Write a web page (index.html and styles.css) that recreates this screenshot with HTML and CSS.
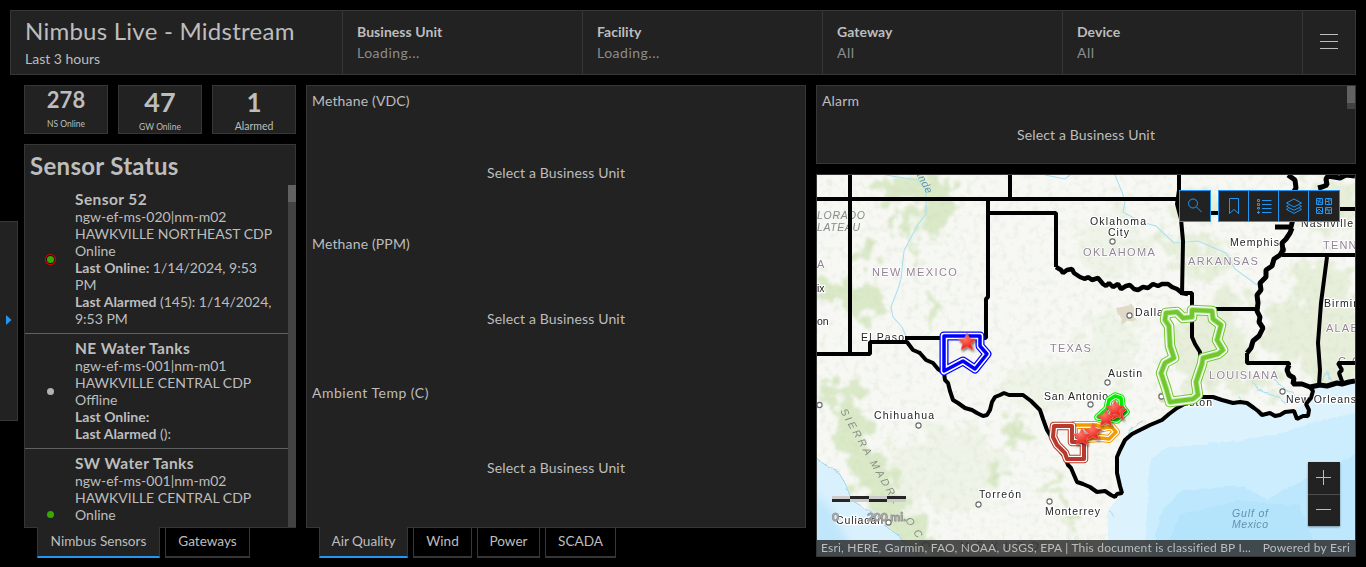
FILE: index.html
```html
<!DOCTYPE html>
<html lang="en">
<head>
<meta charset="utf-8">
<title>Nimbus Live - Midstream</title>
<link rel="stylesheet" href="styles.css">
</head>
<body>
<div class="dashboard">
  <header class="header">
    <div class="brand"><h1 class="title">Nimbus Live - Midstream</h1><div class="subtitle">Last 3 hours</div></div>
    <div class="selector"><b>Business Unit</b><span>Loading...</span></div>
    <div class="selector"><b>Facility</b><span>Loading...</span></div>
    <div class="selector"><b>Gateway</b><span>All</span></div>
    <div class="selector"><b>Device</b><span>All</span></div>
    <div class="menu"><i></i><i></i><i></i></div>
  </header>
  <main class="content">
    <section class="left">
      <div class="counters">
        <div class="counter c1"><strong>278</strong><span>NS Online</span></div>
        <div class="counter c2"><strong>47</strong><span>GW Online</span></div>
        <div class="counter c3"><strong>1</strong><span>Alarmed</span></div>
      </div>
      <div class="panel sensors">
        <h2 class="sensors-title">Sensor Status</h2>
        <div class="list-wrap">
          <div class="list">
            <div class="item">
              <div class="mark"><span class="dot alarm"></span></div>
              <div class="text"><h3>Sensor 52</h3><p>ngw-ef-ms-020|nm-m02</p><p>HAWKVILLE NORTHEAST CDP</p><p>Online</p><p><b>Last Online:</b> 1/14/2024, 9:53<br>PM</p><p><b>Last Alarmed</b> (145): 1/14/2024,<br>9:53 PM</p></div>
            </div>
            <div class="item">
              <div class="mark"><span class="dot off"></span></div>
              <div class="text"><h3>NE Water Tanks</h3><p>ngw-ef-ms-001|nm-m01</p><p>HAWKVILLE CENTRAL CDP</p><p>Offline</p><p><b>Last Online:</b></p><p><b>Last Alarmed</b> ():</p></div>
            </div>
            <div class="item last">
              <div class="mark"><span class="dot"></span></div>
              <div class="text"><h3>SW Water Tanks</h3><p>ngw-ef-ms-001|nm-m02</p><p>HAWKVILLE CENTRAL CDP</p><p>Online</p><p><b>Last Online:</b></p></div>
            </div>
          </div>
          <div class="track"><div class="thumb"></div></div>
        </div>
      </div>
      <nav class="tabs"><a class="tab active t-ns">Nimbus Sensors</a><a class="tab t-gw">Gateways</a></nav>
    </section>
    <section class="middle">
      <div class="panel charts">
        <div class="chart"><h4>Methane (VDC)</h4><div class="empty">Select a Business Unit</div></div>
        <div class="chart"><h4>Methane (PPM)</h4><div class="empty">Select a Business Unit</div></div>
        <div class="chart"><h4 class="wide">Ambient Temp (C)</h4><div class="empty">Select a Business Unit</div></div>
      </div>
      <nav class="tabs"><a class="tab active t-air">Air Quality</a><a class="tab t-wind">Wind</a><a class="tab t-power">Power</a><a class="tab t-scada">SCADA</a></nav>
    </section>
    <section class="right">
      <div class="panel alarm-panel">
        <div class="chart"><h4>Alarm</h4><div class="empty">Select a Business Unit</div></div>
        <div class="alarm-track"><div class="alarm-thumb"></div></div>
      </div>
      <div class="map">
        <svg class="basemap" viewBox="817 175 538 381" width="538" height="381">
          <defs>
            <filter id="rough" x="-20%" y="-20%" width="140%" height="140%">
              <feTurbulence type="fractalNoise" baseFrequency="0.06" numOctaves="4" seed="4" result="n"/>
              <feDisplacementMap in="SourceGraphic" in2="n" scale="46" xChannelSelector="R" yChannelSelector="G"/>
              <feGaussianBlur stdDeviation="1.6"/>
            </filter>
            <filter id="edge" x="-5%" y="-5%" width="110%" height="110%">
              <feTurbulence type="fractalNoise" baseFrequency="0.13" numOctaves="2" seed="9" result="n"/>
              <feDisplacementMap in="SourceGraphic" in2="n" scale="5" xChannelSelector="R" yChannelSelector="G"/>
            </filter>
            <filter id="relief" x="0" y="0" width="100%" height="100%">
              <feTurbulence type="fractalNoise" baseFrequency="0.15" numOctaves="5" seed="12"/>
              <feColorMatrix values="0 0 0 0 0.58  0 0 0 0 0.66  0 0 0 0 0.48  2.6 0 0 0 -1.25"/>
            </filter>
            <filter id="soft"><feGaussianBlur stdDeviation="5"/></filter>
            <filter id="shade" x="-40%" y="-40%" width="190%" height="190%"><feDropShadow dx="1" dy="1.5" stdDeviation="1" flood-opacity=".6"/></filter>
            <radialGradient id="red" cx=".4" cy=".35"><stop offset="0" stop-color="#ff7668"/><stop offset="1" stop-color="#ec2a22"/></radialGradient>
            <path id="star" fill="url(#red)" stroke="#ee6e64" stroke-width=".6" d="M0-9L2.700-3.300 9-2.900 4.300 1.600 5.900 8 0 4.800-5.900 8-4.300 1.600-9-2.900-2.700-3.300z"/>
            <path id="zone-green" d="M1166 313l11-1 6 6 9-1v-7l20 1 1 8 8 6-4 15 6 10-5 4-15 4-1 6-6 18 2 13-5 4-23 3-4-14-5-15 4-10 9-5-4-12-1-20-4-6z"/>
            <path id="zone-blue" d="M944 336h36v10l7 8-12 15-12-8-19 10z"/>
            <path id="zone-orange" d="M1074 425h22l8 3 7-2 5 6-7 7-8-1-27 2z"/>
            <path id="zone-red" d="M1054 426h18v16h12v17h-17l-2-6-8-8-4-8z"/>
            <path id="zone-lime" d="M1098 417l9-8 2-9 6-4 6 2 1 9 4 5-9 8z"/>
            <clipPath id="water"><path d="M1108 556V510L1122 493 1117 473 1117 457 1125 440 1140 430 1162 420 1177 408 1200 397 1233 403 1247 403 1262 415 1293 412 1305 403 1312 387 1355 381V556z"/></clipPath>
          </defs>
          <path fill="#f7f8f4" d="M817 175h538v381H817z"/>
          <g filter="url(#rough)" fill="#d3e5bc">
            <g opacity=".8">
              <ellipse cx="905" cy="188" rx="36" ry="13"/><ellipse cx="936" cy="204" rx="15" ry="35"/><ellipse cx="910" cy="224" rx="9" ry="16"/>
              <ellipse cx="842" cy="294" rx="30" ry="11"/><ellipse cx="868" cy="305" rx="18" ry="12"/><ellipse cx="930" cy="308" rx="7" ry="17"/>
              <ellipse cx="868" cy="253" rx="11" ry="12"/><ellipse cx="914" cy="262" rx="4" ry="20"/>
              <path d="M827 382l30 3 12 55 40 62 35 54h-48l-24-48-26-42z"/>
              <ellipse cx="1061" cy="499" rx="4" ry="34" transform="rotate(-30 1061 499)"/><ellipse cx="1013" cy="430" rx="10" ry="16"/>
              <ellipse cx="1001" cy="473" rx="12" ry="5"/>
            </g>
            <g opacity=".45">
              <ellipse cx="1190" cy="244" rx="46" ry="8"/><ellipse cx="1200" cy="268" rx="35" ry="10"/><ellipse cx="1200" cy="205" rx="28" ry="16"/>
              <ellipse cx="1330" cy="330" rx="30" ry="65"/><ellipse cx="1208" cy="350" rx="42" ry="38"/><ellipse cx="1285" cy="335" rx="22" ry="32"/>
              <ellipse cx="1328" cy="206" rx="36" ry="24"/><ellipse cx="1307" cy="285" rx="14" ry="26"/><ellipse cx="1247" cy="384" rx="35" ry="10"/>
              <ellipse cx="1230" cy="304" rx="22" ry="12"/>
            </g>
            <g opacity=".2"><ellipse cx="1110" cy="348" rx="30" ry="40"/><ellipse cx="1050" cy="385" rx="50" ry="24"/><ellipse cx="1113" cy="245" rx="38" ry="32"/><ellipse cx="948" cy="468" rx="58" ry="42"/></g>
          </g>
          <path filter="url(#relief)" opacity=".25" d="M817 175h538v381H817z"/>
          <path filter="url(#edge)" fill="#e0d9c7" d="M1116 308l16-3 4 14-14 5zM1157 393l10-2 3 10-11 1z"/>
          <path fill="#d9f1fd" stroke="#8ccdea" stroke-width=".8" filter="url(#edge)" d="M812 456l11 8 14 6 8 13 8 18 23 14 14 15 12 9 20 20H812z"/>
          <path fill="#bfe6fb" filter="url(#soft)" d="M812 490l20 20 25 50h-45z"/>
          <g clip-path="url(#water)">
            <path fill="#dcf3fe" d="M1100 370h260v190h-260z"/>
            <path fill="#ccedfe" filter="url(#edge)" d="M1144 560l6-100 16-12 70-7 45-8 40-13 40-8v148z"/>
            <path fill="#bce7fd" filter="url(#edge)" d="M1150 560l12-50 20-20 60-4 25 14 45-25 48-23v108z"/>
            <path fill="#b0e1fc" opacity=".6" filter="url(#edge)" d="M1160 560l20-45 60-15 60 5 20 55z"/>
          </g>
          <g fill="none" stroke="#acdff2" stroke-width="1.1">
            <path d="M886 175l18 3 14 2 8 10v24l-9 12-13 25-3 28-3 10-7 18 2 10 9 10 4 9"/>
            <path d="M1115 175l7 17 3 10-2 10 18 10 15 4 18 17 24-2 28 12 9 16 22 16M1045 175l20 4 5-4"/>
            <path filter="url(#edge)" d="M1125 437l8-11 10-4M1252 380l6 10 20 6 9 8M1274 378l8 10 10 4 5 9M1317 386l10-14 5 10 10 2M1108 510l6 7M1238 396l8 8"/>
          </g>
          <g class="maplabel river">
            <text class="blue" transform="translate(915 172) rotate(62)" textLength="25">ande</text>
            <text x="817" y="219" textLength="48">LORADO</text><text x="817" y="231" textLength="43">LATEAU</text>
            <text x="1232" y="517" textLength="36" class="blue">Gulf of</text><text x="1232" y="528" textLength="36" class="blue">Mexico</text>
            <text transform="translate(840 411) rotate(60)" textLength="108">SIERRA MADRE</text><text transform="translate(905 520) rotate(57)" textLength="36">OCC</text>
          </g>
          <g class="maplabel state">
            <text x="817" y="268">A</text><text x="872" y="276" textLength="86">NEW MEXICO</text><text x="1050" y="352" textLength="42">TEXAS</text>
            <text x="1083" y="256" textLength="73">OKLAHOMA</text><text x="1188" y="265" textLength="71">ARKANSAS</text><text x="1209" y="379" textLength="70">LOUISIANA</text>
            <text x="1323" y="249">TENN</text><text x="1326" y="332">ALAB</text><text x="1338" y="365" class="grey">G C</text><text x="960" y="550" textLength="80">MÉXICO</text>
          </g>
          <g class="maplabel city">
            <text x="817" y="292">ix</text><text x="817" y="325">on</text><text x="861" y="341" textLength="43">El Paso</text>
            <text x="874" y="419" textLength="60">Chihuahua</text><text x="979" y="498" textLength="42">Torreón</text><text x="1045" y="515" textLength="55">Monterrey</text><text x="836" y="524" textLength="47">Culiacán</text>
            <text x="1090" y="225" textLength="56">Oklahoma</text><text x="1108" y="236" textLength="21">City</text><text x="1230" y="246" textLength="49">Memphis</text><text x="1301" y="227" textLength="52">Nashville</text>
            <text x="1135" y="316" textLength="34">Dallas</text><text x="1324" y="307" textLength="35">Birmin</text><text x="1108" y="377" textLength="34">Austin</text><text x="1044" y="400" textLength="64">San Antonio</text>
            <text x="1167" y="406" textLength="45">Houston</text><text x="1286" y="403" textLength="70">New Orleans</text>
          </g>
          <g fill="#fff" stroke="#666" stroke-width="1.1"><circle cx="918.500" cy="425.500" r="2.6"/><circle cx="978.500" cy="504.500" r="2.6"/><circle cx="1049.500" cy="501.500" r="2.6"/><circle cx="888.500" cy="522.500" r="2.6"/><circle cx="1112.500" cy="241.500" r="2.6"/><circle cx="1129.500" cy="315.500" r="2.6"/><circle cx="1107.500" cy="382.500" r="2.6"/><circle cx="1090.500" cy="404.500" r="2.6"/><circle cx="1161.500" cy="396.500" r="2.6"/><circle cx="1282.500" cy="391.500" r="2.6"/><circle cx="1283" cy="250" r="2.6"/><circle cx="819.500" cy="405" r="2.6"/></g>
          <g class="borders">
            <path d="M817 199h362M850 175v179M1010 175v24M988 199v14h68v54M988 213v84l-2 2v39h-81M817 354h53v-12h37l6 8 7 3M1182 213h93M1213 309h45M1282 255h73M1339 209h16M1247 353v10h42v2M1327 257l-6 46-3 40 2 27-1 15M1355 363h-17l4 7-3 3 4 11M1182 293h10v44l3 7 5 8 1 15M1179 175v15l-2 14 4 15 2 22-1 54"/>
            <path d="M919 352L926 360 933 363 938 369 944 373 945 380 948 383 950 391 953 400 958 403 965 408 972 410 977 413 983 416 987 415 990 410 992 402 995 397 1000 395 1004 393 1009 395 1023 395 1031 401 1036 406 1040 410 1043 419 1047 430 1055 443 1061 452 1065 457 1068 465 1071 468 1074 475 1077 482 1083 484 1090 487 1097 492 1105 491 1111 495 1115 497 1117 494 1122 493 1120 486 1117 473 1117 457 1120 450 1125 440 1132 434 1140 430 1150 425 1162 420 1169 414 1177 408 1188 402 1200 397 1213 397 1222 400 1233 403 1240 402 1247 403 1254 408 1258 411 1262 415 1270 413 1275 416 1280 415 1285 412 1294 411 1297 419 1303 416 1308 416 1309 410 1306 404 1311 398 1313 391 1310 387"/>
            <path stroke-width="4.500" d="M1056 267L1061 270 1063 273 1067 270 1072 269 1074 273 1080 277 1085 279 1088 277 1092 280 1098 278 1103 284 1106 286 1109 283 1113 287 1118 284 1121 289 1126 286 1130 285 1134 289 1138 290 1143 287 1148 288 1153 284 1158 286 1162 284 1168 284 1172 287 1177 289 1182 293 1188 294"/>
            <path stroke-width="5" d="M1288 175L1295 180 1296 188 1293 193 1296 201 1292 210 1293 219 1291 227H1275M1292 228L1290 233 1286 239 1282 243 1283 250 1280 255 1274 259 1272 266 1266 270 1266 277 1260 283 1261 290 1257 295 1258 303 1257 311 1260 317 1259 322 1263 328 1259 336 1253 341 1251 348 1247 353M1289 365L1287 370 1289 375 1294 378 1293 384 1302 384 1310 387 1320 385 1327 386 1337 383 1342 384 1349 382 1355 381M1355 176L1346 175 1340 178 1334 177 1328 176 1326 179 1327 185 1322 187 1318 188"/>
          </g>
          <g fill="none" stroke-linejoin="round">
            <use href="#zone-green" stroke="#70c72e" stroke-width="10.500"/><use href="#zone-green" stroke="#fff" stroke-width="8.500"/><use href="#zone-green" stroke="#b8e39a" stroke-width="6"/><use href="#zone-green" stroke="#70c72e" stroke-width="4"/>
            <use href="#zone-blue" stroke="#00f" stroke-width="9"/><use href="#zone-blue" stroke="#fff" stroke-width="6.500"/><use href="#zone-blue" stroke="#00f" stroke-width="3.500"/>
            <use href="#zone-orange" stroke="#f49a00" stroke-width="8"/><use href="#zone-orange" stroke="#fff" stroke-width="6"/><use href="#zone-orange" stroke="#f49a00" stroke-width="3.500"/>
            <use href="#zone-red" stroke="#b83a2c" stroke-width="8.500"/><use href="#zone-red" stroke="#fff" stroke-width="6.500"/><use href="#zone-red" stroke="#b83a2c" stroke-width="4"/>
            <use href="#zone-lime" stroke="#00ed00" stroke-width="7.500"/><use href="#zone-lime" stroke="#fff" stroke-width="5.500"/><use href="#zone-lime" stroke="#00ed00" stroke-width="3.500"/>
          </g>
          <g filter="url(#shade)"><use href="#star" x="967" y="342"/><use href="#star" x="1118" y="412"/><use href="#star" x="1115" y="409"/><use href="#star" x="1106" y="418"/><use href="#star" x="1093" y="432"/><use href="#star" x="1082" y="437"/></g>
          <path fill="#ccc" d="M832 496h74v6h-74z"/><path fill="#262626" d="M832 499h18v3h-18zM850 496h19v3h-19zM869 499h18v3h-18zM887 496h19v3h-19z"/>
          <g class="scale-label"><text x="832" y="521">0</text><text x="867" y="521" textLength="39">200 mi.</text></g>
        </svg>
        <div class="map-tools">
          <div class="tool single"><svg width="16" height="16" viewBox="0 0 16 16"><circle cx="6" cy="5.500" r="4.500"/><path d="M9.300 8.800L14.500 14"/></svg></div>
          <div class="tool-group">
            <div class="tool"><svg width="16" height="16" viewBox="0 0 16 16"><path d="M3.500.5h9v15L8 11.500l-4.500 4z"/></svg></div>
            <div class="tool"><svg width="16" height="16" viewBox="0 0 16 16"><path d="M6 2.500H15.500M6 6.500H15.500M6 10.500H15.500M6 14.500H15.500M1.500 1.500h2v2h-2zM1.500 5.500h2v2h-2zM1.500 9.500h2v1.500h-2zM1 14.500h3M2.500 12.800v3"/></svg></div>
            <div class="tool"><svg width="16" height="16" viewBox="0 0 16 16"><path d="M8 1L15.500 5 8 9 .5 5zM2.500 7.200L.5 8.300 8 12.300l7.500-4-2-1.100M2.500 10.300L.5 11.400 8 15.400l7.500-4-2-1.100"/></svg></div>
            <div class="tool"><svg width="16" height="16" viewBox="0 0 16 16"><path d="M.5.5h6v6h-6zM9.500.5h6v6h-6zM.5 9.500h6v6h-6zM9.500 9.500h6v6h-6zM1 2.500l3 1V1M2 6l1-2.500L6 5M10 3.500h3v3M12 1v1h3M1 13l2-2 3 3M3 15v-2M10 12h5M13 12v3M11 10v2"/></svg></div>
          </div>
        </div>
        <div class="zoom"><div><svg width="15" height="15" viewBox="0 0 15 15"><path d="M0 7.500h15M7.500 0v15"/></svg></div><div><svg width="15" height="15" viewBox="0 0 15 15"><path d="M0 7.500h15"/></svg></div></div>
        <div class="attribution"><span class="sources">Esri, HERE, Garmin, FAO, NOAA, USGS, EPA | This document is classified BP I...</span><span class="powered">Powered by Esri</span></div>
      </div>
    </section>
  </main>
  <div class="drawer"><svg width="6" height="10" viewBox="0 0 6 10"><path fill="#2196f3" d="M0 0l5.500 5L0 10z"/></svg></div>
</div>
</body>
</html>
```
FILE: styles.css
```css
* { box-sizing: border-box; }
body { margin: 0; background: #000; color: #bdbdbd; font-family: Lato, "Open Sans", sans-serif; font-size: 14px; }
h1, h2, h3, h4, p { margin: 0; font-weight: 400; }
.dashboard { position: relative; height: 567px; padding: 10px; overflow: hidden; }
.header { display: flex; height: 65px; background: #222; border: 1px solid #363636; }
.brand { width: 331px; padding: 3px 14px; }
.title { font-size: 24px; line-height: 34px; font-weight: 400; white-space: nowrap; letter-spacing: .25px; }
.subtitle { line-height: 22px; }
.selector { width: 240px; border-left: 1px solid #363636; padding: 10px 14px; display: flex; flex-direction: column; line-height: 21px; }
.selector b { letter-spacing: .05px; }
.selector span { color: #8c8c8c; letter-spacing: .5px; }
.menu { flex: 1; border-left: 1px solid #363636; display: flex; flex-direction: column; align-items: center; justify-content: center; gap: 6px; padding-bottom: 2px; }
.menu i { width: 18px; height: 1px; background: #bdbdbd; }
.content { display: flex; gap: 10px; padding: 10px 0 0 14px; }
.left { width: 272px; }
.panel { background: #222; border: 1px solid #363636; }
.counters { display: flex; gap: 10px; height: 49px; margin-bottom: 10px; }
.counter { flex: 1; background: #222; border: 1px solid #363636; display: flex; flex-direction: column; align-items: center; }
.counter strong { height: 31px; line-height: 28px; font-size: 22px; }
.counter span { line-height: 20px; font-size: 8.5px; }
.c2 strong { font-size: 27px; line-height: 32px; }
.c2 span { line-height: 21px; }
.c3 strong { font-size: 26px; line-height: 32px; }
.c3 span { font-size: 10.5px; line-height: 18px; }
.sensors { height: 384px; display: flex; flex-direction: column; }
.sensors-title { height: 40px; padding-left: 5px; font-size: 24px; line-height: 41px; font-weight: 700; letter-spacing: .3px; }
.list-wrap { flex: 1; display: flex; min-height: 0; margin-right: -1px; }
.list { flex: 1; overflow: hidden; }
.track { width: 8px; background: #424242; }
.thumb { height: 17px; background: #616161; }
.item { display: flex; padding: 5px 0 6px; border-bottom: 1px solid #616161; }
.item.last { height: 132px; }
.mark { width: 50px; display: flex; align-items: center; justify-content: center; padding-top: 1px; }
.dot { width: 7px; height: 7px; border-radius: 50%; background: #38a800; }
.dot.off { background: #b2b2b2; }
.dot.alarm { box-shadow: 0 0 0 1px #151515, 0 0 0 2px #e00000; }
.text { white-space: nowrap; line-height: 17px; }
.text h3 { font-size: 15.5px; line-height: 18px; font-weight: 700; letter-spacing: .4px; }
.tabs { display: flex; gap: 5px; height: 31px; margin-top: -1px; padding-left: 13px; position: relative; }
.tab { border: 1px solid #363636; border-top: 0; border-bottom: 2px solid #363636; background: #000; text-align: center; line-height: 26px; margin-top: 1px; font-size: 13.6px; }
.tab.active { background: #222; border-bottom-color: #2196f3; margin-top: 0; line-height: 28px; }
.t-ns { width: 123px; }
.t-gw { width: 85px; }
.t-air { width: 89px; }
.t-wind { width: 59px; }
.t-power { width: 63px; }
.t-scada { width: 71px; }
.middle { width: 500px; }
.charts { height: 443px; display: grid; grid-template-rows: 143px 149px 149px; }
.charts .empty { padding-top: 10px; }
.chart { padding: 5px; display: flex; flex-direction: column; letter-spacing: .15px; }
.chart h4 { line-height: 20px; }
.chart .wide { letter-spacing: .5px; }
.empty { flex: 1; display: flex; align-items: center; justify-content: center; }
.right { width: 540px; }
.alarm-panel { height: 79px; display: flex; margin-bottom: 10px; }
.alarm-panel .chart { flex: 1; padding-right: 0; }
.alarm-panel .empty { padding-left: 3px; }
.alarm-track { width: 8px; height: 23px; background: #424242; }
.alarm-thumb { height: 17px; background: #616161; }
.map { position: relative; height: 383px; border: 1px solid #363636; overflow: hidden; }
.basemap { display: block; }
.maplabel { font-family: "Liberation Sans", Arial, sans-serif; font-size: 10.5px; stroke: #fff; stroke-width: 2.5px; paint-order: stroke; stroke-linejoin: round; }
.city { fill: #242424; }
.state { fill: #938398; font-size: 11px; letter-spacing: 1.2px; stroke-width: 1.5px; }
.state .grey { fill: #777; }
.river { fill: #858b87; font-style: italic; stroke: none; }
.river .blue { fill: #5f93ad; }
.borders { fill: none; stroke: #000; stroke-width: 4px; stroke-linejoin: bevel; }
.scale-label { font-family: Lato, sans-serif; font-size: 12px; font-weight: 700; fill: #b8b8b8; stroke: #929292; stroke-width: .8px; }
.map-tools { position: absolute; top: 15px; right: 15px; display: flex; gap: 7px; }
.tool { width: 30px; height: 30px; background: #222; display: flex; align-items: center; justify-content: center; }
.tool svg { fill: none; stroke: #2196f3; stroke-width: 1; }
.single { width: 32px; height: 32px; border: 1px solid #2196f3; }
.tool-group { display: flex; border: 1px solid #2196f3; }
.tool-group .tool:first-child { width: 29px; }
.tool-group .tool + .tool { border-left: 1px solid #2196f3; }
.tool-group .tool:last-child { width: 31px; }
.zoom { position: absolute; right: 15px; top: 287px; width: 32px; height: 64px; background: #222; box-shadow: 0 1px 2px rgba(0,0,0,.4); }
.zoom div { height: 32px; display: flex; align-items: center; justify-content: center; padding-right: 1px; padding-bottom: 1px; }
.zoom div + div { border-top: 1px solid #4d4d4d; padding-bottom: 2px; }
.zoom svg { fill: none; stroke: #bdbdbd; }
.attribution { position: absolute; left: 0; right: 0; bottom: 0; height: 16px; padding: 0 5px 0 4px; background: rgba(34,34,34,.8); display: flex; justify-content: space-between; font-size: 12px; line-height: 16px; white-space: nowrap; letter-spacing: .2px; }
.drawer { position: absolute; left: 0; top: 221px; width: 18px; height: 200px; background: #222; border: 1px solid #363636; border-left: 0; display: flex; align-items: center; padding: 0 0 2px 6px; }
```
